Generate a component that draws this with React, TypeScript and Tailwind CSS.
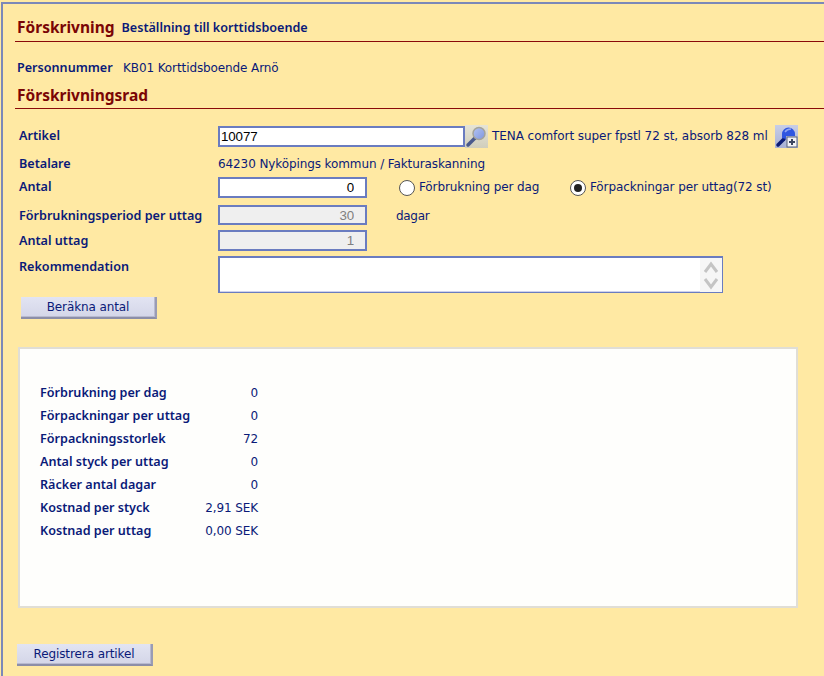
import React from 'react';

const MagnifierIcon: React.FC = () => (
  <svg width="23" height="23" viewBox="0 0 23 23" className="shrink-0">
    <defs>
      <linearGradient id="magBg" x1="0" y1="0" x2="0" y2="1">
        <stop offset="0" stopColor="#e6e4d6" />
        <stop offset="1" stopColor="#d0cebc" />
      </linearGradient>
      <linearGradient id="magLens" x1="0" y1="0" x2="1" y2="1">
        <stop offset="0" stopColor="#b4c4f2" />
        <stop offset="1" stopColor="#7f96de" />
      </linearGradient>
    </defs>
    <rect width="23" height="23" fill="url(#magBg)" />
    <path d="M3 20 L10 13" stroke="#4a5a8c" strokeWidth="3.5" strokeLinecap="round" />
    <circle cx="14" cy="8.5" r="6" fill="url(#magLens)" stroke="#a5a49a" strokeWidth="1.5" />
  </svg>
);

const MagnifierPlusIcon: React.FC = () => (
  <svg width="23" height="23" viewBox="0 0 23 23" className="shrink-0">
    <defs>
      <linearGradient id="plusBg" x1="0" y1="0" x2="0" y2="1">
        <stop offset="0" stopColor="#c8cee6" />
        <stop offset="1" stopColor="#a8b0d4" />
      </linearGradient>
    </defs>
    <rect width="23" height="23" fill="url(#plusBg)" />
    <path d="M3 20 L9 14" stroke="#0c1c74" strokeWidth="3.5" strokeLinecap="round" />
    <path d="M7 13 V9 A6.5 6.5 0 0 1 20 9 V11 H11 V14 Z" fill="#2f56e0" />
    <path d="M10 7 Q12 4 16 4" stroke="#8fa6f0" strokeWidth="1.5" fill="none" />
    <rect x="12" y="12" width="10" height="10" fill="#f2f2f6" stroke="#5a6478" />
    <path d="M17 14 V20 M14 17 H20" stroke="#3c4660" strokeWidth="2" />
  </svg>
);

const Heading: React.FC<{ title: string; sub?: string; className?: string }> = ({ title, sub, className }) => (
  <div className={`flex h-[22px] items-center gap-[7px] border-b border-[#8a0a0a] pl-[2px] tracking-normal ${className ?? ''}`}>
    <span className="font-['Noto_Sans',sans-serif] text-[15.5px] font-bold text-[#7a0505]">{title}</span>
    {sub && <span className="font-['Noto_Sans',sans-serif] text-[12.6px] font-semibold text-[#0a1a78]">{sub}</span>}
  </div>
);

const Label: React.FC<{ children: React.ReactNode; className?: string }> = ({ children, className }) => (
  <div className={`w-[203px] shrink-0 pl-[4px] font-['Noto_Sans',sans-serif] text-[12.6px] font-semibold tracking-normal ${className ?? ''}`}>{children}</div>
);

const Button: React.FC<{ children: React.ReactNode }> = ({ children }) => (
  <button className="block h-[22px] w-[136px] border-r-2 border-b-2 border-r-[#9a9cb4] border-b-[#8c8ea8] bg-gradient-to-b from-[#e2e4f2] to-[#d4d6e8] text-[12px] text-[#0a1a78] shadow-[inset_-1px_-1px_0_#b8bad0]">
    {children}
  </button>
);

const Radio: React.FC<{ checked?: boolean }> = ({ checked }) => (
  <span className="flex h-[16px] w-[16px] items-center justify-center rounded-full border border-[#555] bg-white">
    {checked && <span className="h-[8px] w-[8px] rounded-full bg-[#222]" />}
  </span>
);

const stats = [
  ['Förbrukning per dag', '0'],
  ['Förpackningar per uttag', '0'],
  ['Förpackningsstorlek', '72'],
  ['Antal styck per uttag', '0'],
  ['Räcker antal dagar', '0'],
  ['Kostnad per styck', '2,91 SEK'],
  ['Kostnad per uttag', '0,00 SEK'],
];

export default function App() {
  return (
    <div className="h-[676px] overflow-hidden bg-[#ffe9a3] pt-[2px] pl-[1px]">
      <div className="h-full border-t-2 border-l-2 border-[#7c88b8] pt-[16px] pl-[12px] font-['DejaVu_Sans',sans-serif] tracking-[-0.1px] text-[#0a1a78]">
        <Heading title="Förskrivning" sub="Beställning till korttidsboende" className="pb-[5px]" />

        <div className="mt-[18px] flex h-[16px] items-center pl-[2px] text-[12px]">
          <span className="w-[106px] font-['Noto_Sans',sans-serif] text-[12.6px] font-semibold tracking-normal">Personnummer</span>
          <span>KB01 Korttidsboende Arnö</span>
        </div>

        <div className="mt-[11px]">
          <Heading title="Förskrivningsrad" className="pb-[3px]" />
        </div>

        <div className="mt-[17px] flex h-[21px] items-center">
          <Label className="pb-[1px]">Artikel</Label>
          <input
            readOnly
            value="10077"
            className="h-[21px] w-[247px] border-2 border-[#6a7cc0] bg-white px-[1px] font-['Liberation_Sans',sans-serif] text-[13.33px] text-black outline-none"
          />
          <MagnifierIcon />
          <span className="ml-[4px] w-[283px] shrink-0 pb-[2px] text-[12px] tracking-[-0.06px] whitespace-nowrap">TENA comfort super fpstl 72 st, absorb 828 ml</span>
          <MagnifierPlusIcon />
        </div>

        <div className="mt-[8px] flex h-[16px] items-center pt-[2px]">
          <Label>Betalare</Label>
          <span className="text-[12px]">64230 Nyköpings kommun / Fakturaskanning</span>
        </div>

        <div className="mt-[6px] flex h-[21px] items-center">
          <Label className="pb-[1px]">Antal</Label>
          <input
            readOnly
            value="0"
            className="h-[21px] w-[149px] border-2 border-[#6a7cc0] bg-white px-[11px] text-right font-['Liberation_Sans',sans-serif] text-[13.33px] text-black outline-none"
          />
          <div className="ml-[32px] flex w-[171px] items-center gap-[4px] text-[12px]">
            <Radio />
            <span className="pb-[2px]">Förbrukning per dag</span>
          </div>
          <div className="flex items-center gap-[4px] text-[12px]">
            <Radio checked />
            <span className="pb-[2px]">Förpackningar per uttag(72 st)</span>
          </div>
        </div>

        <div className="mt-[7px] flex h-[20px] items-center">
          <Label className="pt-[2px]">Förbrukningsperiod per uttag</Label>
          <input
            readOnly
            value="30"
            className="h-[20px] w-[149px] border-2 border-[#6a7cc0] bg-[#efefef] px-[11px] text-right font-['Liberation_Sans',sans-serif] text-[13.33px] text-[#808080] outline-none"
          />
          <span className="ml-[29px] pt-[2px] text-[12px] tracking-[-0.3px]">dagar</span>
        </div>

        <div className="mt-[5px] flex h-[21px] items-center">
          <Label className="pt-[1px]">Antal uttag</Label>
          <input
            readOnly
            value="1"
            className="h-[21px] w-[149px] border-2 border-[#6a7cc0] bg-[#efefef] px-[11px] text-right font-['Liberation_Sans',sans-serif] text-[13.33px] text-[#808080] outline-none"
          />
        </div>

        <div className="mt-[5px] flex h-[37px] items-start">
          <div className="pt-[2px]"><Label>Rekommendation</Label></div>
          <div className="flex h-[37px] w-[505px] border-2 border-r border-b border-[#6a7cc0] bg-white">
            <div className="flex-1 border-b border-[#cfd2ee]" />
            <div className="flex w-[22px] flex-col items-center justify-center gap-[3px] bg-[#f6f6f6]">
              <svg width="16" height="13" viewBox="0 0 16 13"><path d="M2 11 L8 3 L14 11" stroke="#c4c4c4" strokeWidth="3" fill="none" /></svg>
              <svg width="16" height="13" viewBox="0 0 16 13"><path d="M2 2 L8 10 L14 2" stroke="#c4c4c4" strokeWidth="3" fill="none" /></svg>
            </div>
          </div>
        </div>

        <div className="mt-[4px] pl-[6px]">
          <Button>Beräkna antal</Button>
        </div>

        <div className="mt-[28px] ml-[3px] h-[261px] w-[780px] border-2 border-[#e0ded6] bg-[#fefefc] pt-[32px] pl-[20px]">
          {stats.map(([label, value]) => (
            <div key={label} className="flex h-[23px] w-[218px] items-center justify-between text-[12px]">
              <span className="pt-[1px] font-['Noto_Sans',sans-serif] text-[12.6px] font-semibold tracking-normal">{label}</span>
              <span>{value}</span>
            </div>
          ))}
        </div>

        <div className="mt-[36px] pl-[2px]">
          <Button>Registrera artikel</Button>
        </div>
      </div>
    </div>
  );
}
